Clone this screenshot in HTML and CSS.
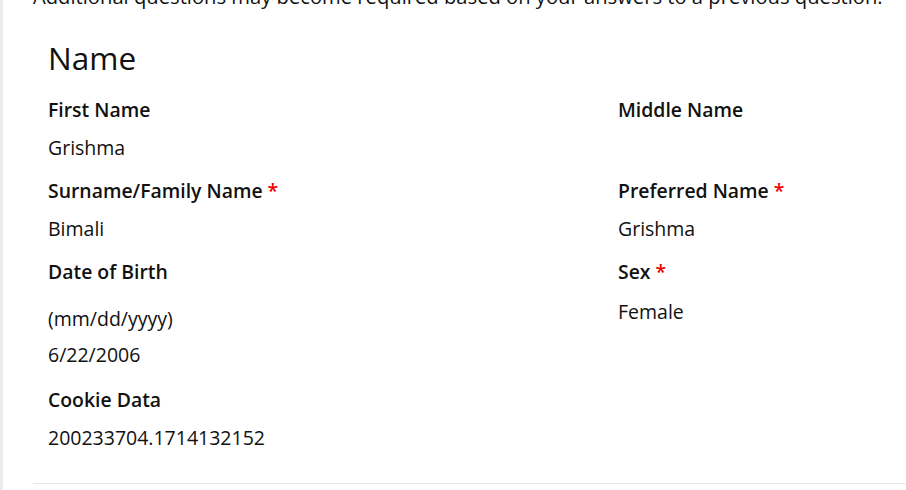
FILE: index.html
```html
<!DOCTYPE html>
<html>
<head>
<meta charset="utf-8">
<link rel="stylesheet" href="styles.css">
</head>
<body>
<div class="page">
  <div class="strip"></div>
  <main class="main">
    <p class="intro">Additional questions may become required based on your answers to a previous question.</p>
    <section class="section">
      <h2 class="heading">Name</h2>
      <div class="grid">
        <div class="field">
          <div class="label">First Name</div>
          <div class="value">Grishma</div>
        </div>
        <div class="field">
          <div class="label">Middle Name</div>
          <div class="value"></div>
        </div>
        <div class="field">
          <div class="label">Surname/Family Name <span class="req">*</span></div>
          <div class="value">Bimali</div>
        </div>
        <div class="field">
          <div class="label">Preferred Name <span class="req">*</span></div>
          <div class="value">Grishma</div>
        </div>
        <div class="field field-date">
          <div class="label">Date of Birth</div>
          <div class="hint">(mm/dd/yyyy)</div>
          <div class="value">6/22/2006</div>
        </div>
        <div class="field">
          <div class="label">Sex <span class="req">*</span></div>
          <div class="value value-sex">Female</div>
        </div>
        <div class="field">
          <div class="label">Cookie Data</div>
          <div class="value">200233704.1714132152</div>
        </div>
      </div>
    </section>
    <hr class="rule">
  </main>
</div>
</body>
</html>
```

FILE: styles.css
```css
html, body {
  margin: 0;
  padding: 0;
  background: #ffffff;
}
body {
  font-family: "Open Sans", "Noto Sans", sans-serif;
  color: #111111;
  overflow: hidden;
}
.page {
  display: flex;
  min-height: 490px;
}
.strip {
  width: 3px;
  flex: none;
  background: #ebebeb;
}
.main {
  flex: 1;
  padding-left: 30px;
  min-width: 0;
}
.intro {
  margin: -16px 0 0 0;
  font-size: 20.2px;
  line-height: 24px;
  white-space: nowrap;
}
.section {
  padding: 0 15px;
}
.heading {
  margin: 30px 0 0 0;
  font-size: 31.5px;
  font-weight: 400;
  line-height: 40px;
}
.grid {
  display: grid;
  grid-template-columns: 570px 1fr;
  align-items: start;
  margin-top: 18px;
}
.field {
  padding-bottom: 15px;
}
.field-date {
  padding-bottom: 17px;
}
.label {
  font-size: 19.4px;
  font-weight: 600;
  line-height: 28px;
}
.req {
  color: #ee0000;
}
.hint {
  font-size: 19.5px;
  line-height: 28px;
  margin-top: 19px;
}
.value {
  font-size: 19.5px;
  line-height: 28px;
  min-height: 28px;
  margin-top: 10px;
}
.value-sex {
  margin-top: 12px;
}
.hint + .value {
  margin-top: 8px;
}
.rule {
  margin: 16px 0 0 0;
  border: 0;
  border-top: 1px solid #e6e6e6;
}
```
